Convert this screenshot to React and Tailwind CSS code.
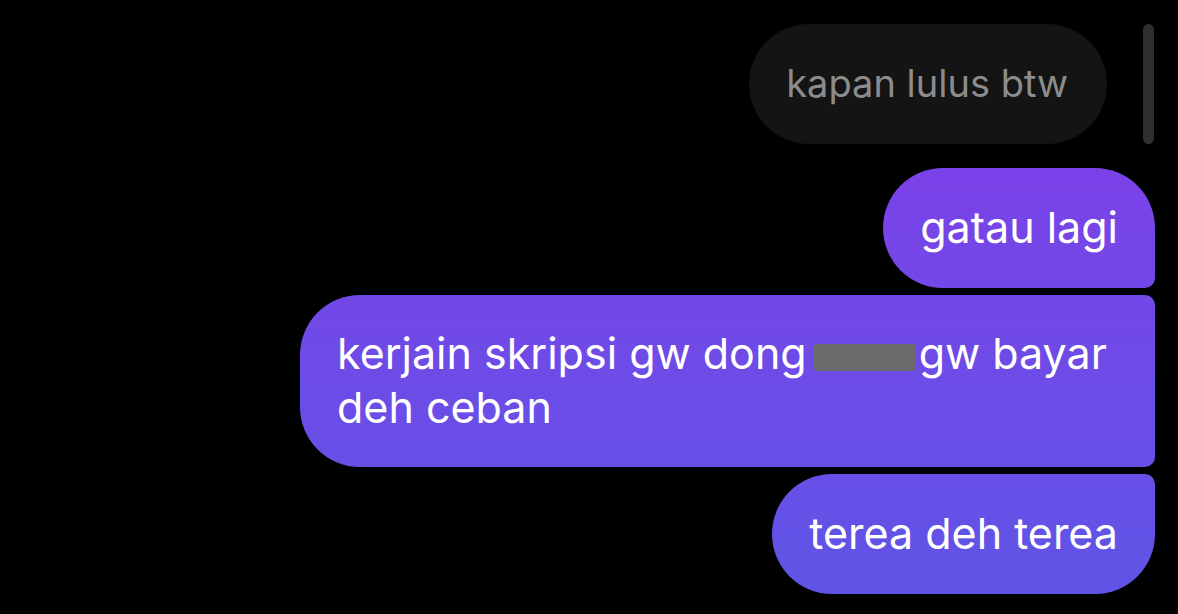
// Chat thread screenshot
const font = { fontFamily: "Inter, 'Noto Sans', sans-serif" };

export default function App() {
  return (
    <div className="relative h-[614px] w-full overflow-hidden bg-black" style={font}>
      {/* scroll indicator */}
      <div className="absolute right-[24px] top-[24px] h-[120px] w-[11px] rounded-full bg-[#2f2f2f]" />

      <div className="flex flex-col items-end pr-[23px] pt-[24px]">
        <div className="mr-[48px] rounded-full bg-[#141414] pl-[37px] pr-[39px] pt-[32px] pb-[34px] text-[38px] leading-[54px] text-[#8c8c8c]">
          kapan lulus btw
        </div>

        <Bubble className="mt-[24px] rounded-[60px] rounded-br-[10px] pt-[32px] pb-[34px]">gatau lagi</Bubble>

        <Bubble className="mt-[7px] w-[855px] rounded-l-[60px] rounded-r-[10px] pt-[31px] pb-[33px]">
          kerjain skripsi gw dong
          <span className="ml-[7px] mr-[3px] inline-block h-[27px] w-[102px] translate-y-[2px] rounded-[3px] bg-[#6b6b6b] blur-[0.6px]" />
          gw bayar
          <br />
          deh ceban
        </Bubble>

        <Bubble className="mt-[7px] rounded-[60px] rounded-tr-[10px] pt-[32px] pb-[34px]">terea deh terea</Bubble>
      </div>
    </div>
  );
}

function Bubble({ className = "", children }) {
  return (
    <div
      className={`bg-gradient-to-b from-[#8338e9] to-[#5d55e6] bg-fixed px-[37px] text-[43px] leading-[54px] text-white ${className}`}
    >
      {children}
    </div>
  );
}
